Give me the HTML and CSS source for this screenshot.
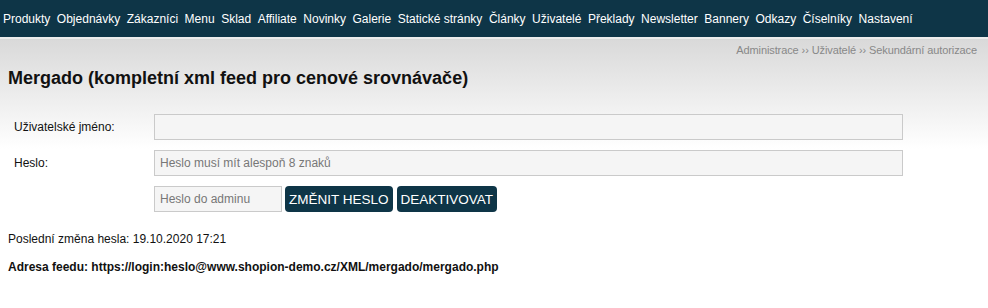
FILE: index.html
```html
<!DOCTYPE html>
<html lang="cs">
<head>
    <meta charset="utf-8" />
    <title>Mergado - Sekundární autorizace</title>
    <link rel="stylesheet" href="styles.css">
</head>
<body>
<div class="menu">
    <a href="#">Produkty</a>
    <a href="#">Objednávky</a>
    <a href="#">Zákazníci</a>
    <a href="#">Menu</a>
    <a href="#">Sklad</a>
    <a href="#">Affiliate</a>
    <a href="#">Novinky</a>
    <a href="#">Galerie</a>
    <a href="#">Statické stránky</a>
    <a href="#">Články</a>
    <a href="#">Uživatelé</a>
    <a href="#">Překlady</a>
    <a href="#">Newsletter</a>
    <a href="#">Bannery</a>
    <a href="#">Odkazy</a>
    <a href="#">Číselníky</a>
    <a href="#">Nastavení</a>
</div>
<div class="content">
    <div class="crumbs">Administrace &rsaquo;&rsaquo; Uživatelé &rsaquo;&rsaquo; Sekundární autorizace</div>
    <h1>Mergado (kompletní xml feed pro cenové srovnávače)</h1>
    <form class="auth">
        <label for="login">Uživatelské jméno:</label>
        <input type="text" id="login" class="wide" />
        <label for="pass">Heslo:</label>
        <input type="password" id="pass" class="wide" placeholder="Heslo musí mít alespoň 8 znaků" />
        <span></span>
        <div class="actions">
            <input type="password" class="admin" placeholder="Heslo do adminu" />
            <button type="button">ZMĚNIT HESLO</button>
            <button type="button">DEAKTIVOVAT</button>
        </div>
    </form>
    <p class="last">Poslední změna hesla: 19.10.2020 17:21</p>
    <p class="feed">Adresa feedu: https://login:heslo@www.shopion-demo.cz/XML/mergado/mergado.php</p>
</div>
</body>
</html>
```

FILE: styles.css
```css
body {
    margin: 0;
    font-family: "Liberation Sans", Arial, sans-serif;
    font-size: 12px;
    color: #111;
    background: #fff;
}
.menu {
    display: flex;
    gap: 6.5px;
    height: 37px;
    align-items: center;
    padding: 0 0 0 3px;
    background: #0e3547;
    border-bottom: 2px solid #ececec;
}
.menu a {
    color: #fff;
    text-decoration: none;
    font-size: 12px;
    line-height: 14px;
}
.content {
    background: linear-gradient(to bottom, #d9d9d9 0, #fff 110px);
    padding: 4px 11px 0 8px;
}
.crumbs {
    text-align: right;
    color: #888;
    font-size: 11px;
    line-height: 14px;
    letter-spacing: -0.1px;
}
h1 {
    margin: 11px 0 0;
    font-size: 18px;
    line-height: 20px;
    font-weight: bold;
}
.auth {
    display: grid;
    grid-template-columns: 146px 749px;
    row-gap: 10px;
    align-items: center;
    margin: 26px 0 0;
}
.auth label {
    padding-left: 6px;
    font-size: 12px;
}
.auth input {
    box-sizing: border-box;
    height: 26px;
    border: 1px solid #cacaca;
    background: #f5f5f5;
    font-family: inherit;
    font-size: 12px;
    padding: 0 5px;
    margin: 0;
    outline: none;
}
.auth input::placeholder {
    color: #777;
}
.actions {
    display: flex;
    gap: 4px;
}
.auth .admin {
    width: 128px;
    margin-right: -1px;
}
button {
    height: 26px;
    margin: 0;
    padding: 0 4px;
    border: 0;
    border-radius: 4px;
    background: #0e3547;
    color: #fff;
    font-family: inherit;
    font-size: 13.5px;
}
.last {
    margin: 20px 0 0;
    line-height: 14px;
}
.feed {
    margin: 14px 0 0;
    line-height: 14px;
    font-weight: bold;
}
```
